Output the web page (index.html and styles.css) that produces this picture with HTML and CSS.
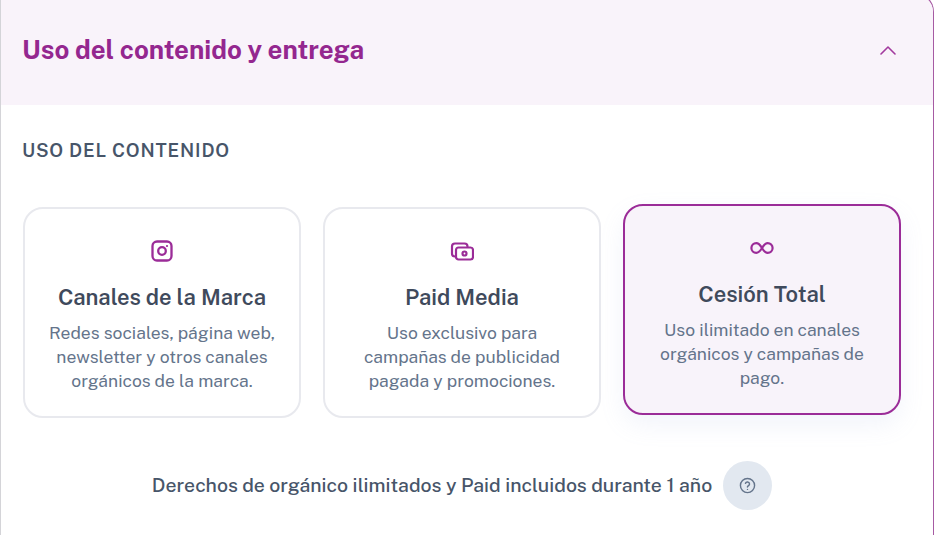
FILE: index.html
```html
<!DOCTYPE html>
<html lang="en">
<head>
    <meta charset="UTF-8">
    <meta name="viewport" content="width=device-width, initial-scale=1.0">
    <title>Uso del contenido y entrega</title>
    <link rel="stylesheet" href="styles.css">
</head>
<body>

<div class="panel">
    <div class="panel-header">
        <h2>Uso del contenido y entrega</h2>
        <svg class="chevron" width="16" height="9" viewBox="0 0 16 9" fill="none" stroke="#a23a9e" stroke-width="1.600" stroke-linecap="round" stroke-linejoin="round">
            <path d="M1 8 8 1l7 7"/>
        </svg>
    </div>

    <div class="panel-body">
        <h3 class="section-title">USO DEL CONTENIDO</h3>

        <div class="options">
            <div class="option">
                <svg class="option-icon" width="24" height="24" viewBox="0 0 24 24" fill="none" stroke="#9b2c98" stroke-width="2.300">
                    <rect x="2.500" y="2.500" width="19" height="19" rx="4.500"/>
                    <circle cx="12" cy="12" r="3.800"/>
                    <circle cx="17" cy="7" r="0.500" stroke-width="1.200"/>
                </svg>
                <h4>Canales de la Marca</h4>
                <p>Redes sociales, página web, newsletter y otros canales orgánicos de la marca.</p>
            </div>
            <div class="option">
                <svg class="option-icon" width="24" height="24" viewBox="0 0 24 24" fill="none" stroke="#9b2c98" stroke-width="2.200" stroke-linecap="round" stroke-linejoin="round">
                    <path d="M5 17.500c-2 0-3-1.200-3-3V7.500c0-2 1.200-3 3-3h9.500c2 0 3 1 3 3"/>
                    <rect x="6" y="8.500" width="17" height="12" rx="2.500"/>
                    <circle cx="14.500" cy="14.500" r="2"/>
                </svg>
                <h4>Paid Media</h4>
                <p>Uso exclusivo para campañas de publicidad pagada y promociones.</p>
            </div>
            <div class="option selected">
                <svg class="option-icon" width="24" height="24" viewBox="0 0 24 24" fill="none" stroke="#9b2c98" stroke-width="2.200">
                    <path d="M12 12c-1.800-3-3.400-4.900-5.700-4.900a4.900 4.900 0 0 0 0 9.800c2.300 0 3.900-1.900 5.700-4.900Zm0 0c1.800 3 3.400 4.900 5.700 4.900a4.900 4.900 0 0 0 0-9.800c-2.300 0-3.900 1.900-5.700 4.900Z"/>
                </svg>
                <h4>Cesión Total</h4>
                <p>Uso ilimitado en canales orgánicos y campañas de pago.</p>
            </div>
        </div>

        <div class="rights">
            <span class="rights-text">Derechos de orgánico ilimitados y Paid incluidos durante 1 año</span>
            <button class="help-btn" type="button" aria-label="Ayuda">
                <svg width="17" height="17" viewBox="0 0 24 24" fill="none" stroke="#64748b" stroke-width="2" stroke-linecap="round" stroke-linejoin="round">
                    <circle cx="12" cy="12" r="10"/>
                    <path d="M9.100 9a3 3 0 0 1 5.800 1c0 2-3 2.700-3 4"/>
                    <path d="M12 17.500h.01"/>
                </svg>
            </button>
        </div>
    </div>
</div>

</body>
</html>
```

FILE: styles.css
```css
body {
    margin: 0;
    overflow: hidden;
    background-color: #fff;
    font-family: "Public Sans", Inter, "Liberation Sans", sans-serif;
}
/* top edge sits just above the window, only the corner curve shows */
.panel {
    height: 543px;
    margin-top: -8px;
    box-sizing: border-box;
    border-top: 2px solid #94278f;
    border-right: 1px solid #a65aa3;
    border-left: 1px solid #d4d4d8;
    border-top-right-radius: 20px;
    overflow: hidden;
}
.panel-header {
    height: 111px;
    padding: 7px 37px 0 21px;
    box-sizing: border-box;
    display: flex;
    align-items: center;
    justify-content: space-between;
    background-color: #f9f3fa;
}
.panel-header h2 {
    margin: 0 0 8px;
    font-size: 25.900px;
    font-weight: 700;
    color: #94278f;
}
.chevron {
    margin-bottom: 6px;
}
.panel-body {
    padding: 34px 32px 0 22px;
}
.section-title {
    margin: 0 0 0 -1px;
    font-size: 18.500px;
    line-height: 22px;
    font-weight: 600;
    letter-spacing: 0.800px;
    color: #475569;
}
.options {
    display: grid;
    grid-template-columns: repeat(3, 1fr);
    gap: 22px;
    margin-top: 46px;
}
.option {
    height: 211px;
    box-sizing: border-box;
    padding: 30px 22px 0;
    border: 2px solid #e8e9ee;
    border-radius: 20px;
    text-align: center;
    background-color: #fff;
}
.option-icon {
    display: block;
    margin: 0 auto;
}
.option h4 {
    margin: 20px 0 0;
    font-size: 22px;
    line-height: 28px;
    font-weight: 600;
    color: #3f4a5c;
}
.option p {
    margin: 9.500px 0 0;
    font-size: 17.500px;
    line-height: 24.400px;
    color: #64748b;
}
.option.selected {
    transform: translateY(-3px);
    border-color: #9b2c98;
    background-color: #f8f3fa;
    box-shadow: 0 10px 25px rgba(148, 163, 220, 0.12);
}
.rights {
    display: flex;
    align-items: center;
    justify-content: center;
    gap: 11px;
    margin-top: 43px;
    font-size: 19.450px;
    font-weight: 500;
    color: #475569;
}
.rights-text {
    margin-bottom: 2px;
}
.help-btn {
    width: 49px;
    height: 49px;
    padding: 0;
    border: none;
    border-radius: 50%;
    background-color: #e2e8f0;
    display: flex;
    align-items: center;
    justify-content: center;
}
```
